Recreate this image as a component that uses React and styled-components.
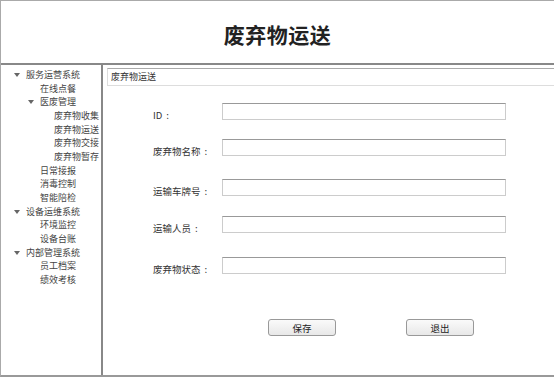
import styled, { createGlobalStyle } from 'styled-components';

const GlobalStyle = createGlobalStyle`
  html, body {
    margin: 0;
    padding: 0;
    background: #fff;
  }
  body {
    font-family: "Noto Sans CJK SC", "Liberation Sans", sans-serif;
    color: #333;
  }
`;

const menu = [
  { label: '服务运营系统', level: 0, open: true },
  { label: '在线点餐', level: 1 },
  { label: '医废管理', level: 1, open: true },
  { label: '废弃物收集', level: 2 },
  { label: '废弃物运送', level: 2 },
  { label: '废弃物交接', level: 2 },
  { label: '废弃物暂存', level: 2 },
  { label: '日常接报', level: 1 },
  { label: '消毒控制', level: 1 },
  { label: '智能陪检', level: 1 },
  { label: '设备运维系统', level: 0, open: true },
  { label: '环境监控', level: 1 },
  { label: '设备台账', level: 1 },
  { label: '内部管理系统', level: 0, open: true },
  { label: '员工档案', level: 1 },
  { label: '绩效考核', level: 1 },
];

const fields = [
  { label: 'ID', top: 17 },
  { label: '废弃物名称', top: 19 },
  { label: '运输车牌号', top: 23 },
  { label: '运输人员', top: 20 },
  { label: '废弃物状态', top: 24 },
];

export default function App() {
  return (
    <>
      <GlobalStyle />
      <Page>
        <Header>
          <Title>废弃物运送</Title>
        </Header>
        <Body>
          <Sidebar>
            {menu.map((item) => (
              <MenuRow key={item.label} $level={item.level}>
                {item.open && <Caret />}
                {item.label}
              </MenuRow>
            ))}
          </Sidebar>
          <Content>
            <PanelTitle>废弃物运送</PanelTitle>
            <Form>
              {fields.map((f) => (
                <FieldRow key={f.label} $top={f.top}>
                  <Label>
                    {f.label}
                    <Colon>:</Colon>
                  </Label>
                  <Input type="text" />
                </FieldRow>
              ))}
            </Form>
            <Actions>
              <Button>保存</Button>
              <Button>退出</Button>
            </Actions>
          </Content>
        </Body>
      </Page>
    </>
  );
}

const Page = styled.div`
  width: 554px;
  height: 377px;
  box-sizing: border-box;
  border-top: 1px solid #aaa;
  border-left: 1px solid #aaa;
  border-bottom: 2px solid #999;
  display: flex;
  flex-direction: column;
`;

const Header = styled.header`
  height: 62px;
  border-bottom: 2px solid #888;
  display: flex;
  align-items: center;
  justify-content: center;
  padding-top: 3px;
  box-sizing: border-box;
  height: 64px;
`;

const Title = styled.h1`
  margin: 0;
  font-size: 21px;
  font-weight: bold;
  color: #222;
  letter-spacing: 0.5px;
`;

const Body = styled.div`
  flex: 1;
  display: flex;
  min-height: 0;
`;

const Sidebar = styled.nav`
  width: 100px;
  border-right: 2px solid #888;
  padding-top: 3px;
`;

const MenuRow = styled.div`
  position: relative;
  height: 13.67px;
  line-height: 13.67px;
  font-size: 9px;
  color: #444;
  padding-left: ${(p) => 25 + p.$level * 14}px;
  white-space: nowrap;
`;

const Caret = styled.span`
  position: absolute;
  top: 5px;
  margin-left: -12px;
  width: 0;
  height: 0;
  border-left: 3px solid transparent;
  border-right: 3px solid transparent;
  border-top: 4px solid #666;
`;

const Content = styled.main`
  flex: 1;
  padding: 3px 0 0 4px;
  display: flex;
  flex-direction: column;
`;

const PanelTitle = styled.div`
  height: 16px;
  line-height: 16px;
  border: 1px solid #ddd;
  border-top-color: #aaa;
  border-right: none;
  padding-left: 3px;
  font-size: 9px;
  color: #333;
`;

const Form = styled.div`
  display: flex;
  flex-direction: column;
  padding-left: 46px;
`;

const FieldRow = styled.div`
  display: flex;
  align-items: center;
  height: 17px;
  margin-top: ${(p) => p.$top}px;
`;

const Label = styled.label`
  width: 69px;
  font-size: 9.5px;
  color: #333;
  margin-top: 6px;
  white-space: nowrap;
`;

const Colon = styled.span`
  margin-left: 4px;
`;

const Input = styled.input`
  width: 284px;
  height: 17px;
  box-sizing: border-box;
  border: 1px solid #ccc;
  border-top-color: #999;
  padding: 0 3px;
  margin: 0;
  background: #fff;
  outline: none;
`;

const Actions = styled.div`
  display: flex;
  gap: 70px;
  padding-left: 161px;
  margin-top: 45px;
`;

const Button = styled.button`
  width: 68px;
  height: 17px;
  padding: 0;
  font-family: inherit;
  font-size: 9.5px;
  color: #222;
  border: 1px solid #999;
  border-radius: 3px;
  background: linear-gradient(#fafafa, #e8e8e8);
`;
